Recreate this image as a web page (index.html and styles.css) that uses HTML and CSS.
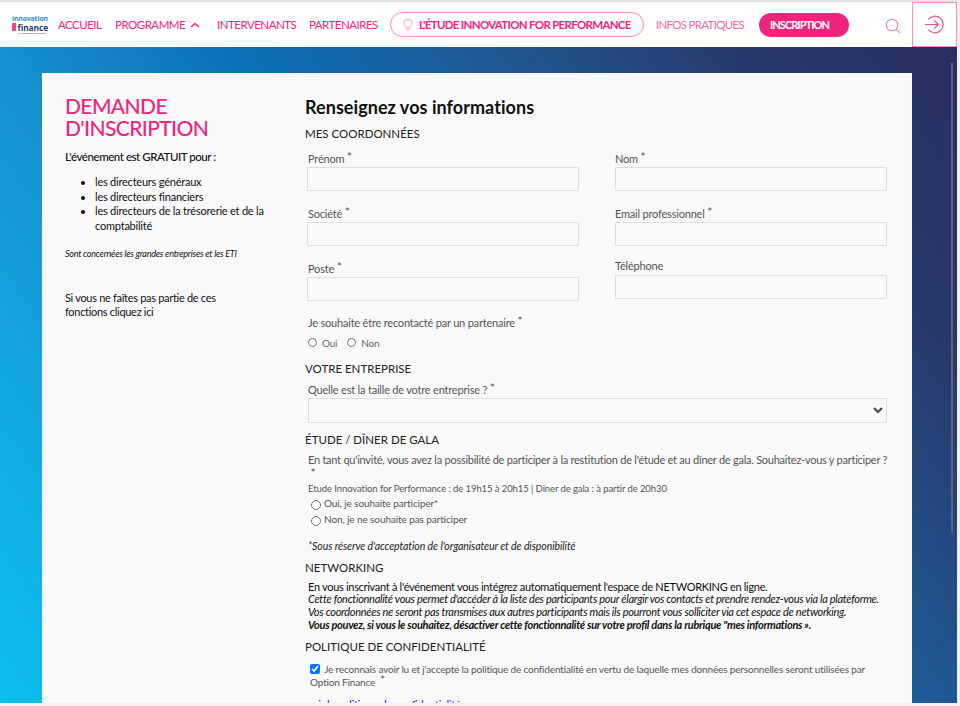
FILE: index.html
```html
<!DOCTYPE html>
<html lang="fr">
<head>
    <meta charset="UTF-8">
    <meta name="viewport" content="width=device-width, initial-scale=1.0">
    <title>Demande d'inscription</title>
    <link rel="stylesheet" href="styles.css">
</head>
<body>
<div class="frame">
    <header class="site-header">
        <div class="logo">
            <span class="logo-top">innovation</span>
            <span class="logo-bottom"><i class="logo-square"></i>finance</span>
            <span class="logo-small">Le rendez-vous de la finance</span>
        </div>
        <nav class="main-nav">
            <a class="nav-accueil">ACCUEIL</a>
            <a class="nav-programme">PROGRAMME
                <svg class="chevron" width="10" height="6" viewBox="0 0 10 6"><path d="M1 5l4-3.600L9 5" fill="none" stroke="#ec267c" stroke-width="1.500"/></svg>
            </a>
            <a class="nav-intervenants">INTERVENANTS</a>
            <a class="nav-partenaires">PARTENAIRES</a>
            <a class="nav-etude">
                <svg width="10" height="13" viewBox="0 0 10 13"><path d="M3 9.200C1.800 8.300 1 7.100 1 5.400a4 4 0 0 1 8 0C9 7.100 8.200 8.300 7 9.200zM3.200 10.700h3.600M3.800 12.200h2.400" fill="none" stroke="#f7a6c8" stroke-width="1"/></svg>
                L'ÉTUDE INNOVATION FOR PERFORMANCE
            </a>
            <a class="nav-infos">INFOS PRATIQUES</a>
            <a class="nav-inscription">INSCRIPTION</a>
        </nav>
        <svg class="search-icon" width="16" height="16" viewBox="0 0 16 16"><circle cx="7" cy="7" r="5.800" fill="none" stroke="#f07fae" stroke-width="1.100"/><path d="M11.200 11.200l4 4" stroke="#f07fae" stroke-width="1.100"/></svg>
        <div class="login-box">
            <svg width="19" height="19" viewBox="0 0 19 19"><path d="M3.200 4.500a8.300 8.300 0 1 1 0 10" fill="none" stroke="#ec4d8f" stroke-width="1.200"/><path d="M0 9.500h13M9.200 5.300l4.200 4.200-4.200 4.200" fill="none" stroke="#ec4d8f" stroke-width="1.200"/></svg>
        </div>
    </header>

    <main class="page-bg">
        <div class="card">
            <aside class="intro">
                <h1>DEMANDE D'INSCRIPTION</h1>
                <p class="intro-lead">L'événement est GRATUIT pour :</p>
                <ul class="intro-list">
                    <li>les directeurs généraux</li>
                    <li>les directeurs financiers</li>
                    <li>les directeurs de la trésorerie et de la comptabilité</li>
                </ul>
                <p class="intro-note">Sont concernées les grandes entreprises et les ETI</p>
                <p class="intro-other">Si vous ne faîtes pas partie de ces<br>fonctions cliquez ici</p>
            </aside>

            <form class="form">
                <h2>Renseignez vos informations</h2>

                <h3 class="first">MES COORDONNÉES</h3>
                <div class="field-grid">
                    <div class="field"><label>Prénom <span class="star">*</span></label><input type="text"></div>
                    <div class="field"><label>Nom <span class="star">*</span></label><input type="text"></div>
                    <div class="field"><label>Société <span class="star">*</span></label><input type="text"></div>
                    <div class="field"><label>Email professionnel <span class="star">*</span></label><input type="text"></div>
                    <div class="field"><label>Poste <span class="star">*</span></label><input type="text"></div>
                    <div class="field"><label class="no-star">Téléphone</label><input type="text"></div>
                </div>

                <div class="block partner">
                    <label>Je souhaite être recontacté par un partenaire <span class="star">*</span></label>
                    <div class="radio-inline">
                        <input type="radio" name="partner"><span>Oui</span>
                        <input type="radio" name="partner"><span>Non</span>
                    </div>
                </div>

                <h3 class="company">VOTRE ENTREPRISE</h3>
                <div class="block">
                    <label>Quelle est la taille de votre entreprise ? <span class="star">*</span></label>
                    <select></select>
                </div>

                <h3 class="gala">ÉTUDE / DÎNER DE GALA</h3>
                <div class="block">
                    <label class="gala-question">En tant qu'invité, vous avez la possibilité de participer à la restitution de l'étude et au dîner de gala. Souhaitez-vous y participer ?<br>&nbsp;<span class="star">*</span></label>
                    <p class="gala-hours">Etude Innovation for Performance : de 19h15 à 20h15 | Diner de gala : à partir de 20h30</p>
                    <div class="radio-row"><input type="radio" name="gala"><span>Oui, je souhaite participer*</span></div>
                    <div class="radio-row"><input type="radio" name="gala"><span>Non, je ne souhaite pas participer</span></div>
                    <p class="gala-note">*Sous réserve d'acceptation de l'organisateur et de disponibilité</p>
                </div>

                <h3 class="networking">NETWORKING</h3>
                <div class="network-text">
                    En vous inscrivant à l'événement vous intégrez automatiquement l'espace de NETWORKING en ligne.<br>
                    <em>Cette fonctionnalité vous permet d'accéder à la liste des participants pour élargir vos contacts et prendre rendez-vous via la plateforme.</em><br>
                    <em>Vos coordonnées ne seront pas transmises aux autres participants mais ils pourront vous solliciter via cet espace de networking.</em><br>
                    <strong><em>Vous pouvez, si vous le souhaitez, désactiver cette fonctionnalité sur votre profil dans la rubrique "mes informations ».</em></strong>
                </div>

                <h3 class="privacy">POLITIQUE DE CONFIDENTIALITÉ</h3>
                <div class="consent">
                    <input type="checkbox" checked>
                    <span>Je reconnais avoir lu et j'accepte la politique de confidentialité en vertu de laquelle mes données personnelles seront utilisées par Option Finance &nbsp;<span class="star">*</span></span>
                </div>
                <a class="privacy-link">voir la politique de confidentialité</a>
            </form>
        </div>
        <div class="scroll-thumb"></div>
    </main>
</div>
</body>
</html>
```

FILE: styles.css
```css
/* base */
html, body {
    margin: 0;
    height: 100%;
    overflow: hidden;
}
body {
    font-family: Lato, "Liberation Sans", sans-serif;
    font-size: 12px;
    color: #111;
    background: #f1f1f1;
}
* { box-sizing: border-box; }
p, h1, h2, h3, ul { margin: 0; padding: 0; }

.frame {
    height: 703px;
    margin-right: 3px;
    border-top: 2px solid #e3e3e3;
    display: flex;
    flex-direction: column;
    overflow: hidden;
}

/* header */
.site-header {
    height: 45px;
    flex: none;
    display: flex;
    align-items: center;
    background: #fff;
    padding-left: 12px;
}
.logo {
    width: 36px;
    flex: none;
    display: flex;
    flex-direction: column;
    font-family: "Open Sans", sans-serif;
    font-weight: 700;
    white-space: nowrap;
    overflow: hidden;
}
.logo-top {
    font-size: 6.800px;
    line-height: 8px;
    letter-spacing: -.1px;
    color: #2d8fc8;
}
.logo-bottom {
    display: flex;
    align-items: center;
    font-size: 8.400px;
    line-height: 9px;
    letter-spacing: -.1px;
    color: #2a3a6d;
}
.logo-square {
    width: 5px;
    height: 8px;
    margin-right: 2px;
    background: #ec4d8f;
}
.logo-small { font-size: 2px; line-height: 3px; padding-left: 6px; color: #667; }

.main-nav {
    display: flex;
    align-items: center;
    margin-left: 10px;
    font-size: 11.500px;
    letter-spacing: -.5px;
    color: #ec267c;
    white-space: nowrap;
}
.nav-accueil { width: 57px; }
.nav-programme { width: 102px; }
.chevron { margin-left: 2px; vertical-align: 1px; }
.nav-intervenants { width: 92px; }
.nav-partenaires { width: 81px; }
.nav-etude {
    width: 254px;
    height: 25px;
    border: 1px solid #f58db8;
    border-radius: 13px;
    display: flex;
    align-items: center;
    gap: 6px;
    padding-left: 12px;
    font-weight: 700;
    letter-spacing: -.7px;
}
.nav-infos { margin-left: 12px; width: 103px; color: #ee6a9e; letter-spacing: -.7px; }
.nav-inscription {
    width: 90px;
    height: 24px;
    padding-left: 11px;
    border-radius: 12px;
    background: #ec267c;
    color: #fff;
    font-size: 11px;
    font-weight: 700;
    letter-spacing: -.95px;
    line-height: 24px;
}
.search-icon { flex: none; margin-left: 36px; margin-top: 2px; }
.login-box {
    width: 45px;
    height: 45px;
    flex: none;
    margin-left: 11px;
    border: 1px solid #f78fba;
    display: flex;
    align-items: center;
    justify-content: center;
}

/* page */
.page-bg {
    flex: 1;
    position: relative;
    padding: 26px 0 0 42px;
    background: linear-gradient(55deg, #0bc0f0 0%, #12a8e2 16%, #1890d0 32%, #0a70b5 49%, #1f5a95 66%, #28386a 85%, #292e60 100%);
    overflow: hidden;
}
.scroll-thumb {
    position: absolute;
    top: 16px;
    right: 4px;
    width: 2px;
    height: 470px;
    background: #5a6288;
}
.card {
    width: 870px;
    min-height: 700px;
    background: #f9f9f9;
    display: flex;
    padding-top: 22px;
}

/* colonne gauche */
.intro {
    width: 263px;
    padding: 0 30px 0 23px;
    flex: none;
    font-size: 11px;
    letter-spacing: -.22px;
}
.intro h1 {
    font-size: 21px;
    line-height: 22px;
    font-weight: 500;
    color: #ec267c;
    letter-spacing: -.6px;
}
.intro-lead {
    margin-top: 10px;
    line-height: 15px;
    font-size: 11.500px;
    font-weight: 500;
    letter-spacing: -.45px;
}
.intro-list {
    margin-top: 11px;
    padding-left: 30px;
    line-height: 14.700px;
}
.intro-note {
    margin-top: 13px;
    font-size: 9px;
    line-height: 14px;
    font-style: italic;
    letter-spacing: -.23px;
}
.intro-other { margin-top: 30px; line-height: 14.500px; letter-spacing: -.3px; }

/* formulaire */
.form {
    width: 582px;
    flex: none;
    color: #555;
    font-size: 11px;
    letter-spacing: -.2px;
}
.form h2 {
    margin-top: 1px;
    font-size: 18px;
    line-height: 22px;
    font-weight: 700;
    color: #111;
    letter-spacing: .05px;
}
.form h3 {
    font-size: 11.500px;
    line-height: 15px;
    font-weight: 400;
    color: #222;
    letter-spacing: 0;
}
.star { font-size: 12px; line-height: 0; position: relative; top: -2px; }
.form h3.first { margin-top: 8px; }
.field-grid {
    display: grid;
    grid-template-columns: 272px 272px;
    column-gap: 36px;
    margin: 10px 0 0 2px;
}
.field { height: 55px; }
.field label {
    display: block;
    height: 16px;
    padding-left: 1px;
    line-height: 16px;
}
.field:nth-child(even) label { padding-left: 0; }
.field label.no-star { height: 17px; margin-top: -3px; }
input[type=text], select {
    display: block;
    width: 100%;
    height: 24px;
    margin: 0;
    background: #f9f9f9;
    border: 1px solid #dedede;
    border-radius: 1px;
    color: #444;
}
.block { margin-left: 3px; }
.partner { margin-top: -1.500px; }
.radio-inline {
    display: flex;
    align-items: center;
    margin-top: 6px;
    font-size: 10px;
}
input[type=radio] {
    width: 9px;
    height: 9px;
    margin: 0;
}
.radio-inline span { margin: 0 10px 0 5px; color: #666; }
.form h3.company { margin-top: 12px; }
.form h3.gala { margin-top: 9px; }
.form h3.networking { margin-top: 7px; }
.form h3.privacy { margin-top: 8px; }
.block > select { width: 579px; height: 25px; margin-top: 0; }
.block > label { display: block; line-height: 16px; }
.company + .block { margin-top: 6px; }
.gala + .block { margin-top: 5px; }
.gala-question {
    width: 582px;
    line-height: 15px !important;
    letter-spacing: -.25px;
    white-space: nowrap;
}
.gala-hours { margin-top: 0; font-size: 9.500px; line-height: 13px; letter-spacing: -.09px; }
.radio-row {
    display: flex;
    align-items: center;
    gap: 3px;
    height: 16px;
    margin-left: 3px;
    font-size: 10px;
    letter-spacing: -.1px;
}
.radio-row:first-of-type { margin-top: 1px; }
.radio-row input { width: 10px; height: 10px; margin-top: 2px; }
.radio-row span { margin-top: -2px; }
.gala-note {
    margin-top: 11px;
    font-style: italic;
    font-size: 10.500px;
    line-height: 14px;
    color: #222;
    letter-spacing: -.08px;
}
.network-text {
    margin: 6px 0 0 3px;
    font-size: 11px;
    line-height: 12.700px;
    color: #111;
    letter-spacing: -.3px;
}
.consent {
    margin: 9px 0 0 5px;
    width: 570px;
    font-size: 10px;
    line-height: 13px;
    letter-spacing: -.16px;
}
.consent input { width: 10px; height: 10px; margin: 0 2px 0 0; vertical-align: -1px; }
.privacy-link {
    display: block;
    margin: 9px 0 0 2px;
    font-size: 11px;
    line-height: 14px;
    color: #2222cc;
}
```
